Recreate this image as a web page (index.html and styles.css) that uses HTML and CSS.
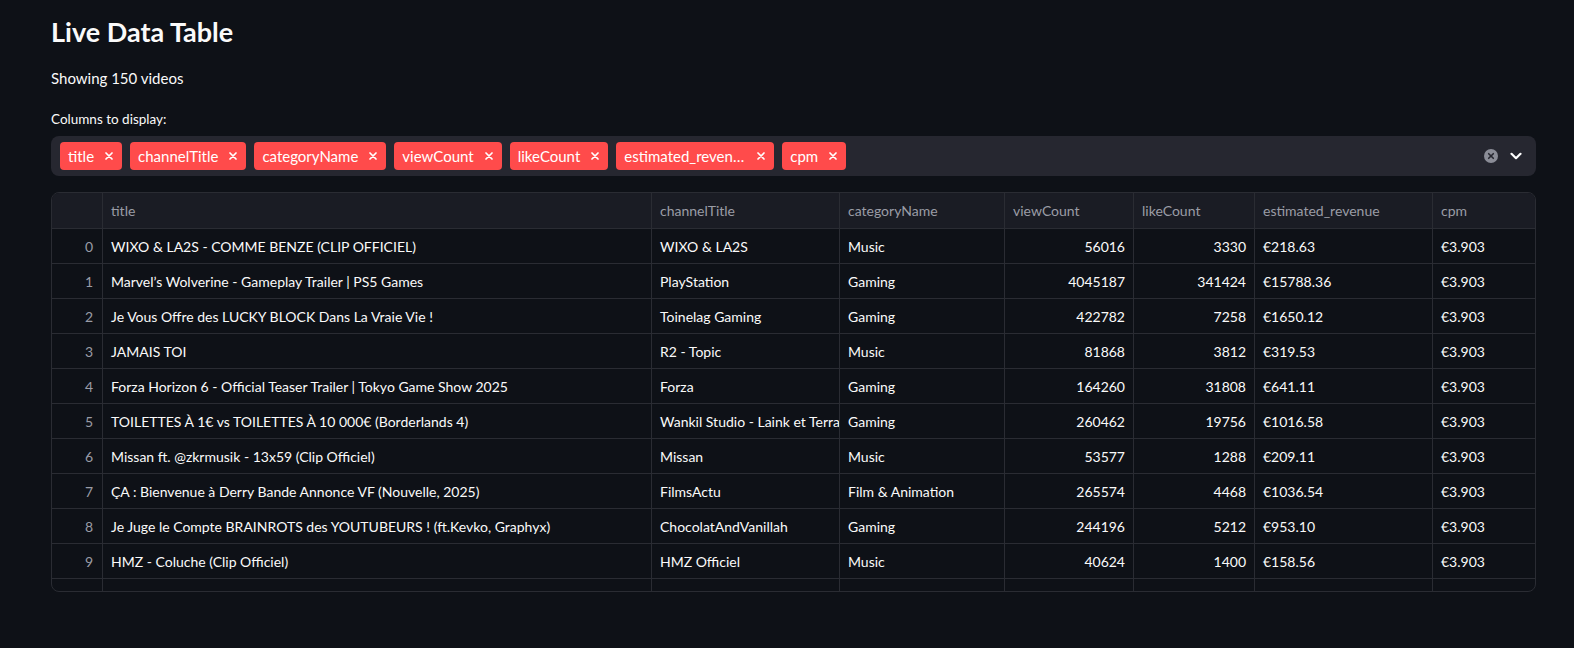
FILE: index.html
```html
<!DOCTYPE html>
<html lang="en">
<head>
<meta charset="utf-8">
<title>Live Data Table</title>
<link rel="stylesheet" href="styles.css">
</head>
<body>
<main class="page">
  <h1 class="heading">Live Data Table</h1>
  <p class="count">Showing 150 videos</p>
  <div class="label">Columns to display:</div>
  <div class="multiselect">
    <div class="tags">
      <span class="tag"><span class="tag-text">title</span><svg class="tag-x" viewBox="0 0 8 8"><path d="M1 1L7 7M7 1L1 7"/></svg></span>
      <span class="tag"><span class="tag-text">channelTitle</span><svg class="tag-x" viewBox="0 0 8 8"><path d="M1 1L7 7M7 1L1 7"/></svg></span>
      <span class="tag"><span class="tag-text">categoryName</span><svg class="tag-x" viewBox="0 0 8 8"><path d="M1 1L7 7M7 1L1 7"/></svg></span>
      <span class="tag"><span class="tag-text">viewCount</span><svg class="tag-x" viewBox="0 0 8 8"><path d="M1 1L7 7M7 1L1 7"/></svg></span>
      <span class="tag"><span class="tag-text">likeCount</span><svg class="tag-x" viewBox="0 0 8 8"><path d="M1 1L7 7M7 1L1 7"/></svg></span>
      <span class="tag"><span class="tag-text tag-trunc">estimated_revenue</span><svg class="tag-x" viewBox="0 0 8 8"><path d="M1 1L7 7M7 1L1 7"/></svg></span>
      <span class="tag"><span class="tag-text">cpm</span><svg class="tag-x" viewBox="0 0 8 8"><path d="M1 1L7 7M7 1L1 7"/></svg></span>
    </div>
    <div class="controls">
      <svg class="clear" viewBox="0 0 14 14"><circle cx="7" cy="7" r="7"/><path d="M4.7 4.7L9.3 9.3M9.3 4.7L4.7 9.3"/></svg>
      <svg class="chevron" viewBox="0 0 12 8"><path d="M1.5 1.8L6 6.2L10.5 1.8"/></svg>
    </div>
  </div>

  <div class="grid">
    <div class="row head">
      <div class="cell idx"></div>
      <div class="cell">title</div>
      <div class="cell">channelTitle</div>
      <div class="cell">categoryName</div>
      <div class="cell">viewCount</div>
      <div class="cell">likeCount</div>
      <div class="cell">estimated_revenue</div>
      <div class="cell last">cpm</div>
    </div>
    <div class="row"><div class="cell idx">0</div><div class="cell">WIXO &amp; LA2S - COMME BENZE (CLIP OFFICIEL)</div><div class="cell">WIXO &amp; LA2S</div><div class="cell">Music</div><div class="cell num">56016</div><div class="cell num">3330</div><div class="cell">€218.63</div><div class="cell last">€3.903</div></div>
    <div class="row"><div class="cell idx">1</div><div class="cell">Marvel’s Wolverine - Gameplay Trailer | PS5 Games</div><div class="cell">PlayStation</div><div class="cell">Gaming</div><div class="cell num">4045187</div><div class="cell num">341424</div><div class="cell">€15788.36</div><div class="cell last">€3.903</div></div>
    <div class="row"><div class="cell idx">2</div><div class="cell">Je Vous Offre des LUCKY BLOCK Dans La Vraie Vie !</div><div class="cell">Toinelag Gaming</div><div class="cell">Gaming</div><div class="cell num">422782</div><div class="cell num">7258</div><div class="cell">€1650.12</div><div class="cell last">€3.903</div></div>
    <div class="row"><div class="cell idx">3</div><div class="cell">JAMAIS TOI</div><div class="cell">R2 - Topic</div><div class="cell">Music</div><div class="cell num">81868</div><div class="cell num">3812</div><div class="cell">€319.53</div><div class="cell last">€3.903</div></div>
    <div class="row"><div class="cell idx">4</div><div class="cell">Forza Horizon 6 - Official Teaser Trailer | Tokyo Game Show 2025</div><div class="cell">Forza</div><div class="cell">Gaming</div><div class="cell num">164260</div><div class="cell num">31808</div><div class="cell">€641.11</div><div class="cell last">€3.903</div></div>
    <div class="row"><div class="cell idx">5</div><div class="cell">TOILETTES À 1€ vs TOILETTES À 10 000€ (Borderlands 4)</div><div class="cell">Wankil Studio - Laink et Terracid</div><div class="cell">Gaming</div><div class="cell num">260462</div><div class="cell num">19756</div><div class="cell">€1016.58</div><div class="cell last">€3.903</div></div>
    <div class="row"><div class="cell idx">6</div><div class="cell">Missan ft. @zkrmusik - 13x59 (Clip Officiel)</div><div class="cell">Missan</div><div class="cell">Music</div><div class="cell num">53577</div><div class="cell num">1288</div><div class="cell">€209.11</div><div class="cell last">€3.903</div></div>
    <div class="row"><div class="cell idx">7</div><div class="cell">ÇA : Bienvenue à Derry Bande Annonce VF (Nouvelle, 2025)</div><div class="cell">FilmsActu</div><div class="cell">Film &amp; Animation</div><div class="cell num">265574</div><div class="cell num">4468</div><div class="cell">€1036.54</div><div class="cell last">€3.903</div></div>
    <div class="row"><div class="cell idx">8</div><div class="cell">Je Juge le Compte BRAINROTS des YOUTUBEURS ! (ft.Kevko, Graphyx)</div><div class="cell">ChocolatAndVanillah</div><div class="cell">Gaming</div><div class="cell num">244196</div><div class="cell num">5212</div><div class="cell">€953.10</div><div class="cell last">€3.903</div></div>
    <div class="row"><div class="cell idx">9</div><div class="cell">HMZ - Coluche (Clip Officiel)</div><div class="cell">HMZ Officiel</div><div class="cell">Music</div><div class="cell num">40624</div><div class="cell num">1400</div><div class="cell">€158.56</div><div class="cell last">€3.903</div></div>
    <div class="row"><div class="cell idx"></div><div class="cell"></div><div class="cell"></div><div class="cell"></div><div class="cell num"></div><div class="cell num"></div><div class="cell"></div><div class="cell last"></div></div>
  </div>
</main>
</body>
</html>
```

FILE: styles.css
```css
* { box-sizing: border-box; }

html, body {
  margin: 0;
  padding: 0;
  background: #0e1117;
}

body {
  font-family: "Lato", "Noto Sans", sans-serif;
  color: #fafafa;
}

.page {
  padding: 16px 38px 0 51px;
}

.heading {
  margin: 0;
  font-size: 27px;
  line-height: 1.2;
  font-weight: 700;
}

.count {
  margin: 18px 0 0;
  font-size: 15px;
  line-height: 24px;
}

.label {
  margin-top: 19px;
  font-size: 13.5px;
  line-height: 21px;
}

.multiselect {
  margin-top: 6px;
  height: 40px;
  background: #262730;
  border-radius: 8px;
  display: flex;
  align-items: center;
  justify-content: space-between;
  padding: 0 14px 0 9px;
}

.tags {
  display: flex;
  gap: 8px;
}

.tag {
  display: flex;
  align-items: center;
  height: 28px;
  background: #ff4b4b;
  border-radius: 4px;
  padding: 0 9px 0 8px;
  font-size: 15px;
  line-height: 28px;
  color: #ffffff;
}

.tag-text {
  white-space: nowrap;
}

.tag-trunc {
  max-width: 122px;
  overflow: hidden;
  text-overflow: ellipsis;
}

.tag-x {
  width: 8px;
  height: 8px;
  margin-left: 11px;
  fill: none;
  stroke: #ffffff;
  stroke-width: 1.7;
  stroke-linecap: round;
}

.controls {
  display: flex;
  align-items: center;
  gap: 12px;
}

.clear {
  width: 14px;
  height: 14px;
}

.clear circle {
  fill: #8b8d97;
}

.clear path {
  fill: none;
  stroke: #262730;
  stroke-width: 1.6;
  stroke-linecap: round;
}

.chevron {
  width: 12px;
  height: 8px;
  fill: none;
  stroke: #ffffff;
  stroke-width: 2.2;
  stroke-linecap: round;
  stroke-linejoin: round;
}

.grid {
  margin-top: 16px;
  height: 400px;
  border: 1px solid #2a2c33;
  border-radius: 8px;
  overflow: hidden;
}

.row {
  display: grid;
  grid-template-columns: 51px 549px 188px 165px 129px 121px 178px 1fr;
  height: 35px;
  border-bottom: 1px solid #2a2c33;
  font-size: 14px;
}

.row.head {
  height: 36px;
  background: #1a1c24;
  color: #9a9ca6;
}

.cell {
  border-right: 1px solid #2a2c33;
  padding: 0 8px;
  display: flex;
  align-items: center;
  white-space: nowrap;
  overflow: hidden;
}

.cell.last {
  border-right: none;
}

.cell.idx {
  justify-content: flex-end;
  color: #9a9ca6;
  padding-right: 9px;
}

.cell.num {
  justify-content: flex-end;
}
```
